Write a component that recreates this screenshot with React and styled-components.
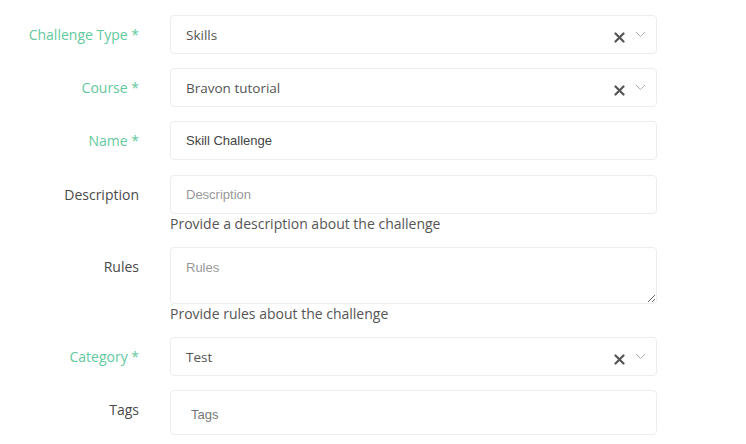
import React from 'react'
import styled, { createGlobalStyle } from 'styled-components'

const Global = createGlobalStyle`
  body {
    margin: 0;
    background: #fff;
    font-family: "Open Sans", "Liberation Sans", sans-serif;
  }
`

const Form = styled.form`
  padding-top: 15px;
  width: 746px;
`

const Row = styled.div`
  display: grid;
  grid-template-columns: 139px 487px;
  column-gap: 31px;
  margin-bottom: ${(p) => p.$gap || 14}px;
`

const Label = styled.label`
  text-align: right;
  font-size: 14px;
  line-height: 39px;
  color: ${(p) => (p.$required ? '#63c99e' : '#4a4a4a')};
`

const Field = styled.div`
  display: flex;
  flex-direction: column;
`

const Box = styled.div`
  box-sizing: border-box;
  height: ${(p) => p.$h || 39}px;
  border: 1px solid #ececf1;
  border-radius: 4px;
  display: flex;
  align-items: center;
  padding: 0 ${(p) => p.$pr || 15}px 0 ${(p) => p.$pl || 15}px;
  background: #fff;
`

const Value = styled.span`
  flex: 1;
  font-size: 13.5px;
  color: #555;
`

const TextInput = styled.input`
  box-sizing: border-box;
  height: 39px;
  width: 100%;
  border: 1px solid #ececf1;
  border-radius: 4px;
  padding: 0 15px;
  font-family: "Liberation Sans", Arial, sans-serif;
  font-size: 13px;
  color: #444;
  outline: none;
  &::placeholder {
    color: #999;
  }
`

const TextArea = styled.textarea`
  box-sizing: border-box;
  height: 57px;
  width: 100%;
  border: 1px solid #ececf1;
  border-radius: 4px;
  padding: 12px 15px;
  font-family: "Liberation Sans", Arial, sans-serif;
  font-size: 13px;
  line-height: 16px;
  outline: none;
  display: block;
  &::placeholder {
    color: #999;
  }
`

const Help = styled.div`
  font-size: 14px;
  line-height: 20px;
  color: #555;
`

const Icons = styled.div`
  display: flex;
  align-items: center;
  gap: 10px;
`

const TagsText = styled.span`
  font-family: "Liberation Sans", Arial, sans-serif;
  font-size: 13px;
  color: #777;
  padding-top: 4px;
`

const Clear = () => (
  <svg width="11" height="11" viewBox="0 0 11 11" style={{ marginTop: 6 }}>
    <path d="M1.5 1.5 L9.5 9.5 M9.5 1.5 L1.5 9.5" stroke="#555" strokeWidth="2.2" strokeLinecap="round" />
  </svg>
)

const Chevron = () => (
  <svg width="11" height="7" viewBox="0 0 11 7">
    <path d="M1 1 L5.5 5.5 L10 1" stroke="#aaa" strokeWidth="1" fill="none" />
  </svg>
)

const Select = ({ value }) => (
  <Box $pr={10}>
    <Value>{value}</Value>
    <Icons>
      <Clear />
      <Chevron />
    </Icons>
  </Box>
)

const App = () => (
  <>
    <Global />
    <Form>
      <Row>
        <Label $required>Challenge Type *</Label>
        <Select value="Skills" />
      </Row>
      <Row>
        <Label $required>Course *</Label>
        <Select value="Bravon tutorial" />
      </Row>
      <Row $gap={15}>
        <Label $required>Name *</Label>
        <TextInput defaultValue="Skill Challenge" />
      </Row>
      <Row $gap={13}>
        <Label>Description</Label>
        <Field>
          <TextInput placeholder="Description" />
          <Help>Provide a description about the challenge</Help>
        </Field>
      </Row>
      <Row $gap={13}>
        <Label>Rules</Label>
        <Field>
          <TextArea placeholder="Rules" />
          <Help>Provide rules about the challenge</Help>
        </Field>
      </Row>
      <Row>
        <Label $required>Category *</Label>
        <Select value="Test" />
      </Row>
      <Row>
        <Label>Tags</Label>
        <Box $h={45} $pl={20}>
          <TagsText>Tags</TagsText>
        </Box>
      </Row>
    </Form>
  </>
)

export default App
